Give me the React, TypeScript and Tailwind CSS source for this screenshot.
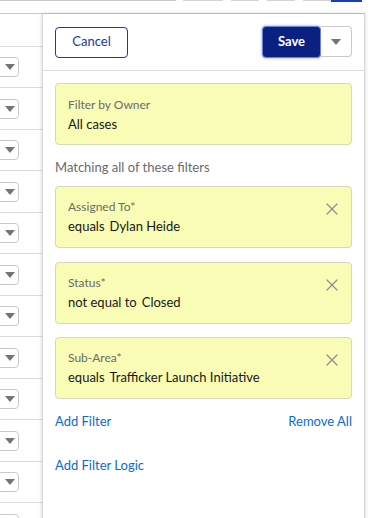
import { X } from "lucide-react";

const rows = Array.from({ length: 12 }, (_, i) => i);

const filters = [
  { label: "Assigned To*", op: "equals", value: "Dylan Heide" },
  { label: "Status*", op: "not equal to", value: "Closed" },
  { label: "Sub-Area*", op: "equals", value: "Trafficker Launch Initiative" },
];

function Caret({ className = "" }: { className?: string }) {
  return (
    <svg width="10" height="6" viewBox="0 0 10 6" className={className}>
      <path d="M0 0 L10 0 L5 6 Z" fill="#747474" />
    </svg>
  );
}

export default function App() {
  return (
    <div className="w-[391px] h-[518px] overflow-hidden bg-white font-['Lato',sans-serif] text-[#181818]">
      {/* bits of the toolbar above */}
      <div className="flex h-[2px] items-start">
        <div className="w-[176px] h-px bg-[#c9c9c9]" />
        <div className="ml-[7px] w-[40px] h-px bg-[#d4d4d4]" />
        <div className="ml-[8px] w-[28px] h-px bg-[#d4d4d4]" />
        <div className="ml-[8px] w-[28px] h-px bg-[#d4d4d4]" />
        <div className="ml-[8px] w-[28px] h-px bg-[#d4d4d4]" />
        <div className="w-[31px] h-[2px] bg-[#1b3fb0]" />
      </div>
      <div className="mt-[11px] w-[365px] h-px bg-[#c9c9c9]" />

      <div className="flex">
        {/* table behind */}
        <div className="w-[42px] shrink-0">
          <div className="h-[33px] border-b border-[#dddbda]" />
          {rows.map((i) => (
            <div
              key={i}
              className={
                "flex items-center border-b border-[#dddbda] " +
                (i % 2 === 0 ? "h-[41px]" : "h-[42px]")
              }
            >
              <div className="-ml-[6px] flex h-[20px] w-[25px] items-center justify-center rounded border border-[#c9c9c9] bg-white pl-[6px]">
                <Caret />
              </div>
            </div>
          ))}
        </div>

        {/* filter panel */}
        <div className="w-[323px] h-[510px] shrink-0 border-x border-[#d8d8d8] bg-white shadow-[0_0_4px_rgba(0,0,0,0.18)]">
          <div className="flex h-[57px] items-center justify-between border-b border-[#dddbda] px-3">
            <button className="flex h-[31px] w-[73px] items-center justify-center rounded border border-[#1b3a9a] text-[13px] text-[#1b3a9a]">
              Cancel
            </button>
            <div className="flex">
              <button className="flex h-[32px] w-[59px] items-center justify-center rounded border border-[#6f82d6] bg-[#0b2182] text-[13px] font-bold text-white shadow-[0_0_3px_#8fa0e8]">
                Save
              </button>
              <button className="flex h-[31px] w-[31px] items-center justify-center rounded-r border border-l-0 border-[#c9c9c9] bg-white">
                <Caret />
              </button>
            </div>
          </div>

          <div className="px-3 pt-3">
            <div className="h-[62px] rounded border border-[#d6d8b9] bg-[#f8fcb4] px-3 pt-[12px]">
              <div className="text-[12px] leading-[18px] text-[#6b6b6b]">Filter by Owner</div>
              <div className="text-[13px] leading-[20px]">All cases</div>
            </div>

            <div className="mt-3 mb-[9px] text-[13px] leading-[20px] text-[#6b6b6b]">
              Matching all of these filters
            </div>

            {filters.map((f, i) => (
              <div
                key={f.label}
                className={
                  "relative h-[62px] rounded border border-[#d6d8b9] bg-[#f8fcb4] px-3 pt-[11px] " +
                  (i === 0 ? "" : i === 1 ? "mt-[14px]" : "mt-[13px]")
                }
              >
                <div className="text-[12px] leading-[18px] text-[#6b6b6b]">{f.label}</div>
                <div className="flex gap-[5px] text-[13px] leading-[20px]">
                  <span>{f.op}</span>
                  <span>{f.value}</span>
                </div>
                <X
                  size={20}
                  strokeWidth={1.5}
                  className="absolute right-[9px] top-[12px] text-[#8f8f8f]"
                />
              </div>
            ))}

            <div className="mt-3 flex justify-between text-[13px] leading-[20px] text-[#0a6ccb]">
              <span>Add Filter</span>
              <span>Remove All</span>
            </div>
            <div className="mt-[24px] text-[13px] leading-[20px] text-[#0a6ccb]">Add Filter Logic</div>
          </div>
        </div>
      </div>
    </div>
  );
}
